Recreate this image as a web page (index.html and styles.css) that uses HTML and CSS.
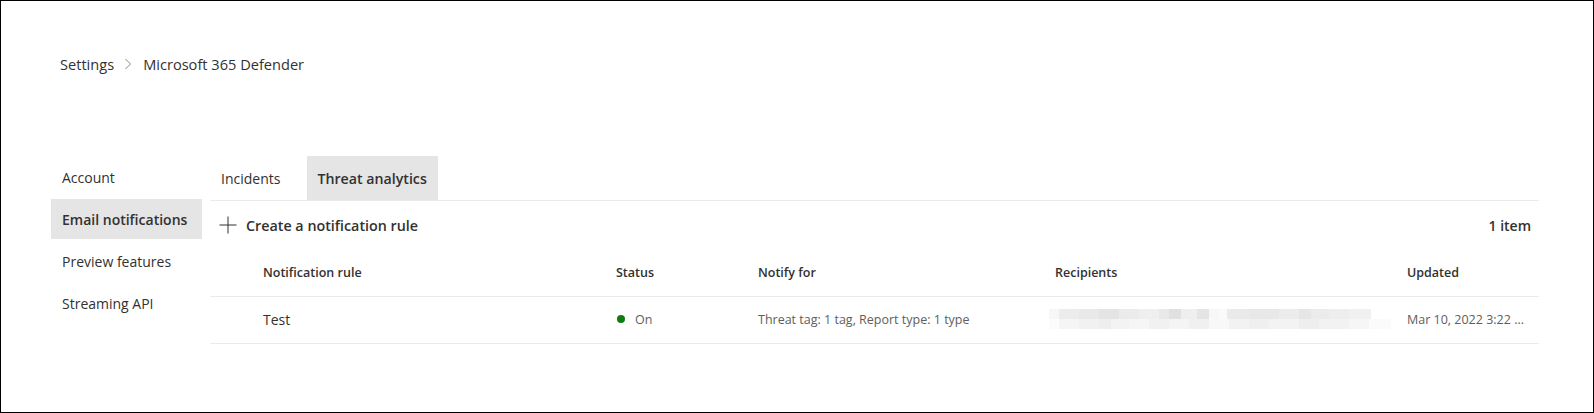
FILE: index.html
```html
<!DOCTYPE html>
<html lang="en">
<head>
<meta charset="utf-8">
<title>Settings - Microsoft 365 Defender</title>
<link rel="stylesheet" href="styles.css">
</head>
<body>
<div class="frame">
  <nav class="breadcrumb">
    <span class="crumb">Settings</span>
    <svg class="chev" width="8" height="12" viewBox="0 0 8 12"><path d="M1.5 1 L6.5 6 L1.5 11" fill="none" stroke="#8a8886" stroke-width="1"/></svg>
    <span class="crumb">Microsoft 365 Defender</span>
  </nav>
  <div class="layout">
    <aside class="sidebar">
      <div class="side-item">Account</div>
      <div class="side-item active">Email notifications</div>
      <div class="side-item">Preview features</div>
      <div class="side-item">Streaming API</div>
    </aside>
    <main class="main">
      <div class="tabs">
        <div class="tab">Incidents</div>
        <div class="tab selected">Threat analytics</div>
      </div>
      <div class="commandbar">
        <button class="create">
          <svg width="18" height="18" viewBox="0 0 18 18"><path d="M9 0.5 V17.5 M0.5 9 H17.5" stroke="#323130" stroke-width="1" fill="none"/></svg>
          <span>Create a notification rule</span>
        </button>
        <span class="count">1 item</span>
      </div>
      <div class="table">
        <div class="row head">
          <div></div>
          <div>Notification rule</div>
          <div>Status</div>
          <div>Notify for</div>
          <div>Recipients</div>
          <div>Updated</div>
        </div>
        <div class="row body">
          <div></div>
          <div class="name">Test</div>
          <div class="status"><span class="dot"></span>On</div>
          <div>Threat tag: 1 tag, Report type: 1 type</div>
          <div class="recip"><div class="blur"><div class="b1"></div><div class="b2"></div></div></div>
          <div>Mar 10, 2022 3:22 ...</div>
        </div>
      </div>
    </main>
  </div>
</div>
</body>
</html>
```
FILE: styles.css
```css
* { box-sizing: border-box; }
html, body { margin: 0; padding: 0; background: #fff; }
body {
  font-family: "Open Sans", "Noto Sans", sans-serif;
  color: #323130;
}
.frame {
  width: 1594px;
  height: 413px;
  border: 1px solid #000;
  background: #fff;
}
.breadcrumb {
  display: flex;
  align-items: center;
  height: 20px;
  margin-top: 53px;
  padding-left: 59px;
  font-size: 14.6px;
}
.chev { margin: 0 11px 0 10px; }
.layout {
  display: flex;
  margin-top: 82px;
}
.sidebar {
  width: 151px;
  margin-left: 50px;
  padding-top: 1px;
  display: flex;
  flex-direction: column;
  gap: 2px;
}
.side-item {
  height: 40px;
  display: flex;
  align-items: center;
  padding-left: 11px;
  font-size: 14px;
}
.side-item.active {
  background: #e5e5e5;
  font-weight: 600;
}
.main {
  flex: 1;
  margin-left: 8px;
  margin-right: 54px;
}
.tabs {
  display: flex;
  gap: 16px;
  height: 44px;
  border-bottom: 1px solid #edebe9;
  box-sizing: content-box;
}
.tab {
  padding: 0 11px;
  display: flex;
  align-items: center;
  font-size: 14px;
}
.tab.selected {
  background: #e5e5e5;
  font-weight: 600;
  padding: 0 11px 0 10px;
  font-size: 14.2px;
}
.commandbar {
  display: flex;
  align-items: center;
  height: 48px;
  padding: 0 8px 0 9px;
}
.create {
  display: flex;
  align-items: center;
  gap: 9px;
  border: 0;
  background: none;
  padding: 0;
  font-family: inherit;
  font-size: 14.3px;
  font-weight: 600;
  color: #323130;
}
.count {
  margin-left: auto;
  font-size: 14px;
  font-weight: 600;
}
.row {
  display: grid;
  grid-template-columns: 53px 353px 142px 297px 352px 1fr;
  align-items: center;
}
.row.head {
  height: 47px;
  font-size: 12.5px;
  font-weight: 600;
  border-bottom: 1px solid #edebe9;
  box-sizing: content-box;
}
.row.body {
  height: 44px;
  font-size: 12.5px;
  color: #605e5c;
  border-bottom: 1px solid #edebe9;
  box-sizing: content-box;
  padding-bottom: 2px;
}
.row.body .name {
  font-size: 14px;
  font-weight: 500;
  color: #323130;
}
.status { display: flex; align-items: center; }
.dot {
  width: 8px;
  height: 8px;
  border-radius: 50%;
  background: #107c10;
  margin-left: 1px;
  margin-right: 10px;
}
.recip { position: relative; height: 20px; }
.blur {
  position: absolute;
  left: -6px;
  top: 0;
  width: 342px;
  height: 20px;
}
.b1 {
  height: 10px;
  width: 322px;
  background: linear-gradient(90deg,
    #f7f7f7 0 10px, #ececec 10px 30px, #e9e9e9 30px 50px, #e4e4e4 50px 70px,
    #ebebeb 70px 90px, #efefef 90px 110px, #e9e9e9 110px 120px, #e0e0e0 120px 132px,
    #eeeeee 132px 140px, #efefef 140px 148px, #e4e4e4 148px 160px, #f7f7f7 160px 170px,
    #fafafa 170px 178px, #eaeaea 178px 200px, #e8e8e8 200px 230px, #ececec 230px 250px,
    #e6e6e6 250px 262px, #ebebeb 262px 280px, #eeeeee 280px 300px, #f0f0f0 300px 322px);
}
.b2 {
  height: 10px;
  width: 342px;
  background: linear-gradient(90deg,
    #fcfcfc 0 10px, #f5f5f5 10px 30px, #f1f1f1 30px 50px, #eeeeee 50px 62px,
    #f3f3f3 62px 80px, #f6f6f6 80px 100px, #f1f1f1 100px 120px, #f4f4f4 120px 140px,
    #f0f0f0 140px 160px, #f8f8f8 160px 180px, #f2f2f2 180px 200px, #efefef 200px 220px,
    #f3f3f3 220px 250px, #eeeeee 250px 270px, #f2f2f2 270px 300px, #f6f6f6 300px 320px,
    #fbfbfb 320px 342px);
}
```
